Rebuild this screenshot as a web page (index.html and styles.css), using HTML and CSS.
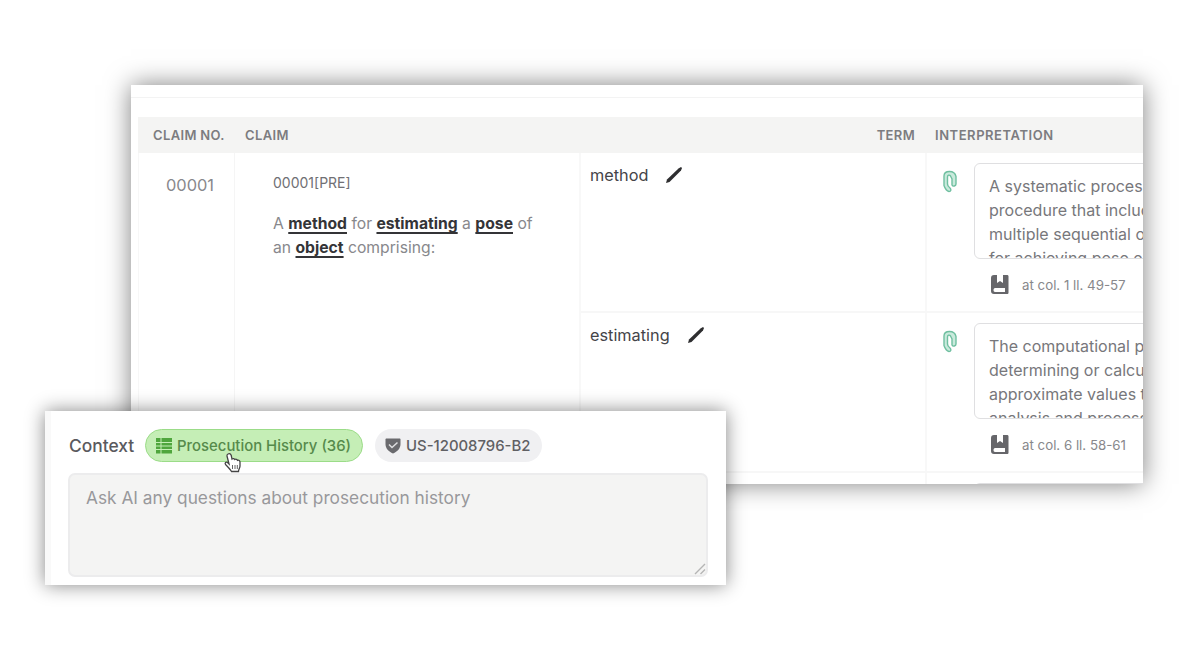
FILE: index.html
```html
<!DOCTYPE html>
<html lang="en">
<head>
    <meta charset="UTF-8">
    <meta name="viewport" content="width=device-width, initial-scale=1.0">
    <title>Claim interpretation</title>
    <link rel="stylesheet" href="styles.css">
</head>
<body>
<div class="claims-panel">
    <div class="top-line"></div>
    <div class="claims-table">
        <div class="table-head">
            <div class="head-cell"><span>CLAIM NO.</span></div>
            <div class="head-cell"><span>CLAIM</span></div>
            <div class="head-cell right"><span>TERM</span></div>
            <div class="head-cell"><span class="head-interp">INTERPRETATION</span></div>
        </div>
        <div class="table-body">
            <div class="claim-no"><span>00001</span></div>
            <div class="claim">
                <div class="claim-part"><span>00001[PRE]</span></div>
                <div class="claim-text">
                    <div><span>A <b>method</b> for <b>estimating</b> a <b>pose</b> of</span></div>
                    <div><span>an <b>object</b> comprising:</span></div>
                </div>
            </div>
            <div class="terms">
                <div class="term-row">
                    <div class="term">
                        <span>method</span>
                        <svg width="18" height="18" viewBox="0 0 18 18"><path d="M1 17l1-3.500L13.500 2.500l2.500-1.500 1 1-1 2.500L4.500 16z" fill="#2e2e30"/></svg>
                    </div>
                    <div class="interpretation">
                        <svg class="clip" width="16" height="24" viewBox="0 0 16 24" fill="none" stroke="#6fbfa0" stroke-width="1.400"><path d="M2 6v9.500c1 3 2.500 5.500 5 6 2 0 2.500-2 1-3.500-1.500-1-2.500-2-2.500-4V7c0-2 2-2.500 3-1l1.500 3v6c1 2 4 1 4-1V6.500C13 2 10 1.500 7.500 1.500 4 1.500 2 3.500 2 6z" fill="#c9eadc"/></svg>
                        <div class="interp-main">
                            <div class="interp-box">
                                <div>A systematic process or</div>
                                <div>procedure that includes</div>
                                <div>multiple sequential operations</div>
                                <div>for achieving pose estimation</div>
                            </div>
                            <div class="source">
                                <svg width="18" height="20" viewBox="0 0 18 20"><path d="M3 0h3v8l3-2 3 2V0h3v13H4c-2 0-2 4 0 4h10v2H3c-2 0-3-1-3-3V3c0-2 1-3 3-3zM14 0h2c1 0 1.500.5 1.500 1.500v16c0 1-.5 1.500-1.500 1.500h-2z" fill="#66666a"/></svg>
                                <span>at col. 1 ll. 49-57</span>
                            </div>
                        </div>
                    </div>
                </div>
                <div class="term-row">
                    <div class="term">
                        <span>estimating</span>
                        <svg width="18" height="18" viewBox="0 0 18 18"><path d="M1 17l1-3.500L13.500 2.500l2.500-1.500 1 1-1 2.500L4.500 16z" fill="#2e2e30"/></svg>
                    </div>
                    <div class="interpretation">
                        <svg class="clip" width="16" height="24" viewBox="0 0 16 24" fill="none" stroke="#6fbfa0" stroke-width="1.400"><path d="M2 6v9.500c1 3 2.500 5.500 5 6 2 0 2.500-2 1-3.500-1.500-1-2.500-2-2.500-4V7c0-2 2-2.500 3-1l1.500 3v6c1 2 4 1 4-1V6.500C13 2 10 1.500 7.500 1.500 4 1.500 2 3.500 2 6z" fill="#c9eadc"/></svg>
                        <div class="interp-main">
                            <div class="interp-box">
                                <div>The computational process</div>
                                <div>determining or calculating</div>
                                <div>approximate values through</div>
                                <div>analysis and processing</div>
                            </div>
                            <div class="source">
                                <svg width="18" height="20" viewBox="0 0 18 20"><path d="M3 0h3v8l3-2 3 2V0h3v13H4c-2 0-2 4 0 4h10v2H3c-2 0-3-1-3-3V3c0-2 1-3 3-3zM14 0h2c1 0 1.500.5 1.500 1.500v16c0 1-.5 1.500-1.500 1.500h-2z" fill="#66666a"/></svg>
                                <span>at col. 6 ll. 58-61</span>
                            </div>
                        </div>
                    </div>
                </div>
                <div class="term-row">
                    <div class="term"></div>
                    <div class="interpretation">
                        <div class="interp-main next-box">
                            <div class="interp-box"></div>
                        </div>
                    </div>
                </div>
            </div>
        </div>
    </div>
</div>

<div class="context-panel">
    <div class="context-row">
        <span class="context-label">Context</span>
        <div class="chip chip-active">
            <svg width="16" height="16" viewBox="0 0 16 16" fill="#4fa63d"><path d="M0 0h4.500v4H0zM5.500 0H16v4H5.500zM0 5h4.500v2.500H0zM5.500 5H16v2.500H5.500zM0 8.500h4.500V11H0zM5.500 8.500H16V11H5.500zM0 12h4.500v3.500H0zM5.500 12H16v3.500H5.500z"/></svg>
            <span>Prosecution History (36)</span>
            <svg class="cursor" width="20" height="22" viewBox="0 0 20 22"><path d="M5 2c1.500-1 3 0 3.200 1.500L9 7c1-.8 2.300-.5 2.800.5 1-.6 2.300-.2 2.700.8 1.300-.5 2.500.3 2.500 1.700v4c0 2-1.500 3-1.500 5.500H8.500C7 17 4.500 14.500 2.500 12.500c-1-1.500.5-3 2-2L6 12 4 4c-.2-.8 0-1.500 1-2z" fill="#fff" stroke="#444" stroke-width="1.300"/><path d="M9.500 13v4M12 13v4M14.300 13v4" stroke="#666" stroke-width="1"/></svg>
        </div>
        <div class="chip">
            <svg width="16" height="16" viewBox="0 0 16 16"><path d="M1.500.5h13c.6 0 1 .5 1 1V6c0 4.500-3 7.500-7.500 9.500C3.500 13.500.5 10.500.5 6V1.500c0-.5.4-1 1-1z" fill="#6a6a6e"/><path d="M4 6.500l3 3L12.500 4.500" fill="none" stroke="#dedee0" stroke-width="1.500"/></svg>
            <span>US-12008796-B2</span>
        </div>
    </div>
    <div class="question-box">
        <span>Ask AI any questions about prosecution history</span>
        <svg class="grip" width="12" height="12" viewBox="0 0 12 12" stroke="#b5b5b5" stroke-width="1.400"><path d="M1 11L11 1M6.500 11L11 6.500"/></svg>
    </div>
</div>
</body>
</html>
```
FILE: styles.css
```css
* {
    box-sizing: border-box;
}

body {
    margin: 0;
    height: 660px;
    padding: 85px 0 0 131px;
    overflow: hidden;
    background-color: #fff;
    font-family: Inter, sans-serif;
    position: relative;
}

svg {
    display: block;
    flex: none;
}

.claims-panel {
    width: 1012px;
    height: 399px;
    overflow: hidden;
    background-color: #fff;
    box-shadow: 0 0 24px rgba(0, 0, 0, 0.5);
}

.top-line {
    height: 13px;
    border-bottom: 1px solid #f3f3f3;
}

.claims-table {
    margin: 19px 0 0 7px;
}

.table-head {
    display: grid;
    grid-template-columns: 97px 344px 346px 1fr;
    height: 36px;
    align-items: center;
    background-color: #f4f4f3;
    color: #7c7c80;
    font-size: 13px;
    font-weight: 600;
    letter-spacing: 0.35px;
}

.head-cell {
    padding: 0 10px;
    white-space: nowrap;
}

.head-cell:first-child {
    padding-left: 15px;
}

.head-interp {
    letter-spacing: 0.55px;
}

.right {
    text-align: right;
}

.table-body {
    display: grid;
    grid-template-columns: 97px 344px 1fr;
    height: 340px;
}

.claim-no {
    padding: 22px 0 0 27px;
    border-left: 1px solid #f7f7f7;
    border-right: 1px solid #f5f5f5;
    line-height: 20px;
    font-size: 16.400px;
    color: #88888c;
}

.claim {
    padding: 20px 0 0 38px;
    color: #88888c;
}

.claim-part {
    font-size: 14px;
    line-height: 20px;
    color: #707074;
}

.claim-text {
    margin-top: 19px;
    font-size: 15.700px;
    line-height: 24px;
    white-space: nowrap;
}

.claim-text b {
    color: #343437;
    font-weight: 700;
    text-decoration: underline;
    text-decoration-thickness: 1.500px;
    text-underline-offset: 3px;
}

.terms {
    border-left: 2px solid #f8f8f8;
}

.term-row {
    display: grid;
    grid-template-columns: 344px 1fr;
    height: 160px;
    border-bottom: 2px solid #f7f7f7;
}

.term {
    display: flex;
    align-items: center;
    align-self: start;
    gap: 17px;
    height: 24px;
    margin: 10px 0 0 9px;
    font-size: 16.300px;
    color: #444448;
}

.interpretation {
    display: flex;
    border-left: 2px solid #f8f8f8;
    min-width: 0;
    padding: 10px 0 0 15px;
}

.clip {
    margin-top: 7px;
}

.interp-main {
    margin-left: 16px;
}

.next-box {
    margin-left: 32px;
}

.interp-box {
    width: 260px;
    height: 96px;
    padding: 10px 14px 0;
    overflow: hidden;
    border: 1px solid #dfdfe1;
    border-radius: 6px;
    font-size: 16px;
    line-height: 24px;
    color: #77777b;
    white-space: nowrap;
}

.source {
    display: flex;
    align-items: center;
    gap: 13px;
    height: 20px;
    margin: 16px 0 0 17px;
    font-size: 13.300px;
    color: #88888c;
}

.context-panel {
    position: absolute;
    left: 45px;
    top: 411px;
    width: 681px;
    height: 174px;
    padding: 18px 18px 0 18px;
    background-color: #fff;
    border-left: 6px solid #f9f9f9;
    box-shadow: 0 0 18px rgba(0, 0, 0, 0.48);
}

.context-row {
    display: flex;
    align-items: center;
    height: 33px;
}

.context-label {
    width: 76px;
    font-size: 17.400px;
    font-weight: 500;
    color: #5a5a5e;
}

.chip {
    display: flex;
    align-items: center;
    position: relative;
    width: 167px;
    height: 33px;
    padding-left: 10px;
    gap: 5px;
    border-radius: 17px;
    background-color: #f0f0f2;
    color: #606064;
    font-size: 14.900px;
    font-weight: 500;
    white-space: nowrap;
}

.chip-active {
    width: 218px;
    margin-right: 12px;
    border: 1.500px solid #9bdc88;
    background-color: #c5eeb6;
    color: #568a4b;
}

.cursor {
    position: absolute;
    left: 77px;
    top: 22px;
}

.question-box {
    position: relative;
    height: 104px;
    margin: 11px 0 0 -1px;
    padding: 13px 16px;
    border: 2px solid #ececed;
    border-radius: 7px;
    background-color: #f4f4f3;
    font-size: 17.300px;
    line-height: 20px;
    color: #98989b;
}

.grip {
    position: absolute;
    right: 0;
    bottom: 0;
}
```
